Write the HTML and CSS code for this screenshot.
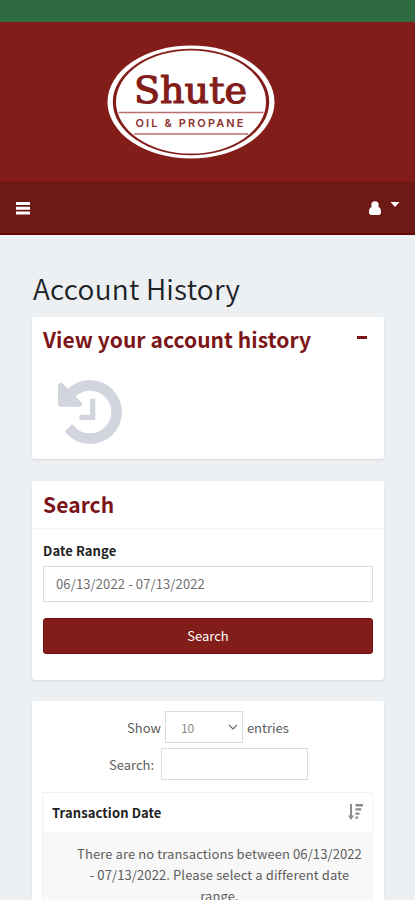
FILE: index.html
```html
<!DOCTYPE html>
<html lang="en">
<head>
<meta charset="utf-8">
<title>Account History</title>
<link rel="stylesheet" href="styles.css">
</head>
<body>
<div class="status"></div>
<header class="brand">
  <svg class="logo" width="168" height="114" viewBox="0 0 168 114">
    <ellipse cx="84" cy="57" rx="83.5" ry="56.5" fill="#fff"/>
    <ellipse cx="84" cy="57" rx="78.2" ry="53.2" fill="#821d1a"/>
    <ellipse cx="84" cy="57" rx="75" ry="51.6" fill="#fff"/>
    <path d="M11.500 67.500H156.500M27 89H141" stroke="#b96f6d" stroke-width="1.300"/>
    <text class="logo-name" x="27" y="57.800" textLength="113" lengthAdjust="spacingAndGlyphs">Shute</text>
    <text class="logo-sub" x="28.500" y="82" textLength="108" lengthAdjust="spacing">OIL &amp; PROPANE</text>
  </svg>
</header>
<nav class="nav">
  <svg class="bars" width="14" height="13" viewBox="0 0 14 13"><path d="M0 0h14v3H0zM0 4.700h14v3H0zM0 9.400h14v3H0z" fill="#fff"/></svg>
  <div class="user">
    <svg width="12" height="14" viewBox="0 0 12 14"><circle cx="6" cy="4" r="3.700" fill="#fff"/><path d="M2.700 6C.6 6.300 0 8.500 0 11.300 0 13 .9 14 2.300 14h7.400c1.400 0 2.300-1 2.300-2.700C12 8.500 11.400 6.300 9.300 6 7.500 7 4.500 7 2.700 6z" fill="#fff"/></svg>
    <svg class="caret" width="10" height="5" viewBox="0 0 10 5"><path d="M0.500 0h9L5 5z" fill="#fff"/></svg>
  </div>
</nav>
<main class="content">
  <h1>Account History</h1>
  <section class="box history">
    <div class="box-head"><h2>View your account history</h2><span class="minus"></span></div>
    <svg class="clock" width="64" height="64" viewBox="0 0 1536 1536"><path d="M1536 768q0 156-61 298t-164 245-245 164-298 61q-172 0-327-72.500T177 1259q-7-10-6.500-22.500t8.500-20.500l137-138q10-9 25-9 16 2 23 12 73 95 179 147t225 52q104 0 198.500-40.500T1130 1130t109.500-163.500T1280 768t-40.500-198.500T1130 406 966.500 296.500 768 256q-98 0-188 35.500T420 393l137 138q31 30 14 69-17 40-59 40H64q-26 0-45-19T0 576V128q0-42 40-59 39-17 69 14l130 129Q346 111 483.500 55.500T768 0q156 0 298 61t245 164 164 245 61 298zM896 480v448q0 14-9 23t-23 9H544q-14 0-23-9t-9-23v-64q0-14 9-23t23-9h224V480q0-14 9-23t23-9h64q14 0 23 9t9 23z" fill="#d2d5de"/></svg>
  </section>
  <section class="box search">
    <div class="box-head"><h2>Search</h2></div>
    <div class="form">
      <label>Date Range</label>
      <div class="input">06/13/2022 - 07/13/2022</div>
      <div class="button">Search</div>
    </div>
  </section>
  <section class="box results">
    <div class="row length"><span>Show</span><div class="select"><span>10</span><svg width="10" height="6" viewBox="0 0 10 6"><path d="M1 1l4 4 4-4" fill="none" stroke="#666" stroke-width="1.100"/></svg></div><span>entries</span></div>
    <div class="row filter"><span>Search:</span><div class="field"></div></div>
    <div class="table">
      <div class="th"><span>Transaction Date</span>
        <svg class="sort" width="15" height="16" viewBox="0 0 15 16" fill="#8b8b8b"><path d="M2 0h2v11.500h2L3 16 0 11.500h2zM7.500 0H15v2.500H7.500zM7.500 4.300h5.700v2.300H7.500zM7.500 8.500h4v2.300h-4zM7.500 12.600h2.500v2.200H7.500z"/></svg>
      </div>
      <div class="td"><div>There are no transactions between 06/13/2022</div><div>- 07/13/2022. Please select a different date</div><div>range.</div></div>
    </div>
  </section>
</main>
</body>
</html>
```
FILE: styles.css
```css
* { box-sizing: border-box; }
html, body { height: 900px; overflow: hidden; }
body {
  margin: 0;
  background: #ecf0f3;
  color: #5c5c5c;
  font: 13px/21px "Noto Sans CJK SC", "Noto Sans", sans-serif;
  white-space: nowrap;
}
svg { display: block; flex: none; }
.status { height: 22px; background: #306a40; }
.brand { height: 160px; padding: 23px 0 0 107px; background: #821d1a; }
.logo-name { font: 38px "DejaVu Serif", serif; fill: #821d1a; stroke: #821d1a; stroke-width: 1.200px; }
.logo-sub { font: 600 11px Inter, sans-serif; fill: #8d302d; }
.nav {
  height: 53px;
  padding: 0 15px 0 16px;
  display: flex;
  align-items: center;
  justify-content: space-between;
  background: #6d1a16;
  border-bottom: 2px solid #650706;
}
.bars { margin-top: 2px; }
.user { display: flex; gap: 9px; margin-top: 1px; }
.caret { margin-top: 1px; }
.content { padding: 33px 31px 0 32px; }
h1 { margin: 0 0 9px; padding: 1px 0 0 1px; font-size: 28px; line-height: 39px; font-weight: 350; letter-spacing: .22px; color: #1c2225; }
.box { background: #fff; border-radius: 3px; box-shadow: 0 1px 2px rgba(0, 0, 0, .1); margin-bottom: 21px; }
.box-head {
  height: 48px;
  padding: 0 17px 0 11px;
  display: flex;
  align-items: center;
  justify-content: space-between;
  border-bottom: 1px solid #f5f5f5;
}
h2 { margin: 0; padding-bottom: 3px; font-size: 21px; line-height: 30px; font-weight: 700; letter-spacing: .07px; color: #7c1518; }
.minus { width: 10px; height: 3px; margin-bottom: 6px; background: #7c1518; }
.history { height: 142px; margin-bottom: 22px; }
.history .box-head { border-bottom-color: #fbfbfb; }
.clock { margin: 15px 0 0 26px; }
.search { height: 199px; }
.search h2 { padding-bottom: 2px; }
.form { padding: 11px 11px 0; }
label { display: block; font-weight: 700; color: #222; letter-spacing: .1px; }
.input { height: 36px; margin: 5px 0 16px; padding-left: 12px; border: 1px solid #d9dce1; line-height: 34px; letter-spacing: .12px; color: #707070; }
.button { height: 36px; border: 1px solid #73100e; border-radius: 3px; background: #821d1a; color: #fff; line-height: 34px; text-align: center; }
.results { height: 240px; padding: 10px 11px 0 10px; }
.row { display: flex; align-items: center; }
.length { height: 32px; padding-left: 85px; gap: 4px; }
.select { width: 78px; height: 32px; padding: 0 4px 0 15px; display: flex; align-items: center; justify-content: space-between; border: 1px solid #d9dce1; font-size: 12px; color: #888; }
.filter { height: 32px; margin: 5px 0 12px; padding-left: 67px; gap: 7px; }
.field { width: 147px; height: 32px; border: 1px solid #d9dce1; }
.table { border: 1px solid #f2f2f2; border-bottom: 0; }
.th { height: 39px; padding: 0 9px; display: flex; align-items: center; justify-content: space-between; font-weight: 700; letter-spacing: .1px; color: #222; }
.sort { margin-bottom: 2px; }
.td { height: 90px; padding: 11px 0 0 24px; background: #f8f8f8; text-align: center; letter-spacing: .1px; }
```
